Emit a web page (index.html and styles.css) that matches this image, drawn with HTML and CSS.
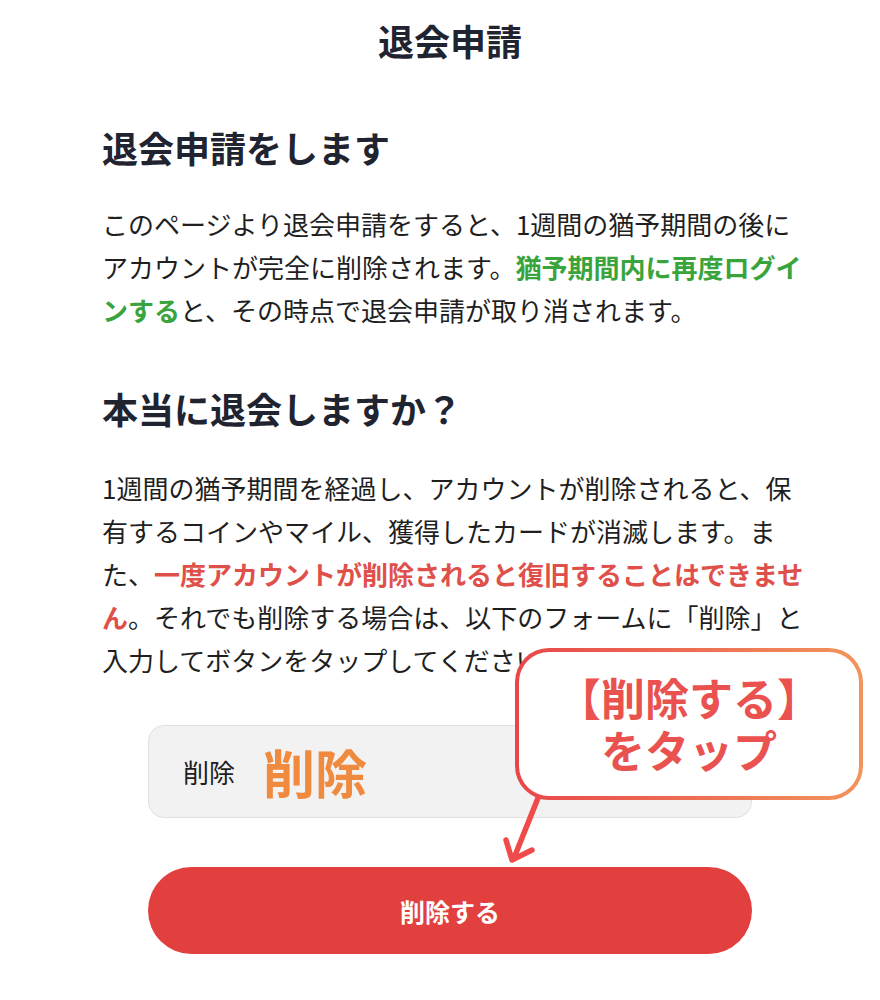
FILE: index.html
```html
<!DOCTYPE html>
<html lang="ja">
<head>
<meta charset="utf-8">
<title>退会申請</title>
<link rel="stylesheet" href="styles.css">
</head>
<body>
<div class="page">
  <h1 class="title">退会申請</h1>
  <div class="content">
    <h2 class="heading first">退会申請をします</h2>
    <p class="text">このページより退会申請をすると、1週間の猶予期間の後にアカウントが完全に削除されます。<strong class="green">猶予期間内に再度ログインする</strong>と、その時点で退会申請が取り消されます。</p>
    <h2 class="heading second">本当に退会しますか？</h2>
    <p class="text">1週間の猶予期間を経過し、アカウントが削除されると、保有するコインやマイル、獲得したカードが消滅します。また、<strong class="red">一度アカウントが削除されると復旧することはできません</strong>。それでも削除する場合は、以下のフォームに「削除」と入力してボタンをタップしてください。</p>
    <div class="field">
      <span class="field-value">削除</span>
      <span class="field-note">削除</span>
    </div>
    <button class="delete-btn" type="button">削除する</button>
  </div>
  <div class="callout">
    <span class="callout-line">【削除する】</span>
    <span class="callout-line">をタップ</span>
  </div>
  <svg class="arrow" width="60" height="80" viewBox="0 0 60 80">
    <path d="M42 2 L18 62" stroke="#f04a4a" stroke-width="5.5" stroke-linecap="round" fill="none"/>
    <path d="M10 44 L16 64 L36 54" stroke="#f04a4a" stroke-width="5.5" stroke-linecap="round" stroke-linejoin="round" fill="none"/>
  </svg>
</div>
</body>
</html>
```
FILE: styles.css
```css
* { box-sizing: border-box; }
html, body { margin: 0; padding: 0; background: #ffffff; }
body {
  font-family: "Noto Sans CJK JP", "Noto Sans", sans-serif;
  color: #1f232b;
}
.page {
  position: relative;
  width: 880px;
  height: 1000px;
  overflow: hidden;
}
.title {
  margin: 0;
  padding: 16px 0 0 20px;
  font-size: 36px;
  line-height: 48px;
  font-weight: 700;
  text-align: center;
  color: #1f2430;
}
.content {
  padding-left: 102px;
  width: 810px;
}
.heading {
  margin: 0;
  font-size: 36px;
  line-height: 48px;
  font-weight: 700;
  color: #1f2430;
}
.heading.first { margin-top: 59px; }
.heading.second { margin-top: 53px; }
.text {
  margin: 31px 0 0;
  font-size: 26px;
  line-height: 43px;
  color: #1f1f1f;
  line-break: strict;
}
.heading.second + .text { margin-top: 34px; }
.green { color: #3aa43c; font-weight: 700; }
.red { color: #e0504a; font-weight: 700; }
.field {
  margin: 44px 0 0 46px;
  width: 604px;
  height: 93px;
  border: 1.5px solid #e1e1e1;
  border-radius: 16px;
  background: #f2f2f2;
  display: flex;
  align-items: center;
  padding-left: 34px;
  gap: 28px;
}
.field-value {
  font-size: 26px;
  color: #1e1e1e;
}
.field-note {
  font-size: 52px;
  font-weight: 700;
  color: #f08a3e;
  line-height: 1;
}
.delete-btn {
  display: block;
  margin: 49px 0 0 46px;
  width: 604px;
  height: 87px;
  border: none;
  border-radius: 44px;
  background: #e23f3f;
  color: #ffffff;
  font-family: "Noto Sans CJK JP", sans-serif;
  font-size: 25px;
  font-weight: 700;
}
.callout {
  position: absolute;
  left: 515px;
  top: 648px;
  width: 348px;
  height: 152px;
  border: 4px solid transparent;
  border-radius: 34px;
  background:
    linear-gradient(#ffffff, #ffffff) padding-box,
    linear-gradient(90deg, #e8474a, #f2955c) border-box;
  display: flex;
  flex-direction: column;
  align-items: center;
  justify-content: center;
  padding-bottom: 2px;
}
.callout-line {
  font-size: 44px;
  line-height: 52px;
  font-weight: 700;
  color: #ea5250;
}
.arrow {
  position: absolute;
  left: 496px;
  top: 796px;
}
```
